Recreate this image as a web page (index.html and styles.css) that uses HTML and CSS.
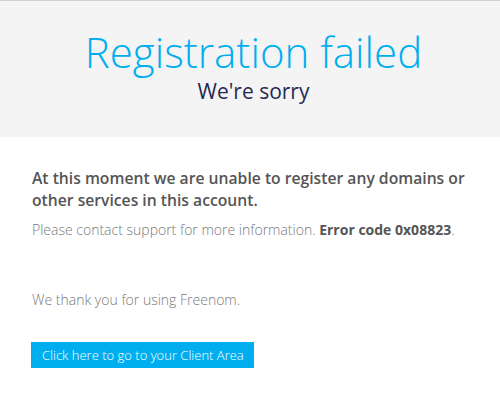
FILE: index.html
```html
<!DOCTYPE html>
<html lang="en">

<head>
    <meta charset="UTF-8">
    <meta name="viewport" content="width=device-width, initial-scale=1.0">
    <title>Registration failed</title>
    <link rel="stylesheet" href="styles.css">
</head>

<body>
    <div id="header">
        <h1>Registration failed</h1>
        <h2>We're sorry</h2>
    </div>
    <div id="content">
        <p class="lead">At this moment we are unable to register any domains or other services in this account.</p>
        <p class="info">Please contact support for more information. <strong>Error code 0x08823</strong>.</p>
        <p class="thanks">We thank you for using Freenom.</p>
        <a href="#" class="btn">Click here to go to your Client Area</a>
    </div>
</body>

</html>
```

FILE: styles.css
```css
* {
    margin: 0;
    padding: 0;
}

body {
    font-family: "Open Sans", "Liberation Sans", sans-serif;
    background: #ffffff;
    border-top: 1px solid #d0d0d0;
}

#header {
    background: #f4f4f4;
    text-align: center;
    padding: 26px 0 32px 7px;
}

#header h1 {
    font-size: 42px;
    font-weight: 300;
    color: #00aeef;
    line-height: 50px;
}

#header h2 {
    font-size: 21px;
    font-weight: 400;
    color: #262a55;
    line-height: 28px;
}

#content {
    padding: 30px 28px 0 32px;
}

.lead {
    font-size: 15.7px;
    font-weight: 600;
    color: #555555;
    line-height: 22px;
}

.info {
    font-size: 14px;
    font-weight: 300;
    color: #7a7a7a;
    margin-top: 9px;
}

.info strong {
    font-weight: 700;
    color: #555555;
}

.thanks {
    font-size: 14px;
    font-weight: 300;
    color: #7a7a7a;
    margin-top: 51px;
}

.btn {
    display: inline-block;
    margin: 33px 0 0 -1px;
    background: #00aeef;
    color: #ffffff;
    font-size: 13px;
    font-weight: 300;
    text-decoration: none;
    line-height: 26px;
    padding: 0 10px 0 11px;
}
```
